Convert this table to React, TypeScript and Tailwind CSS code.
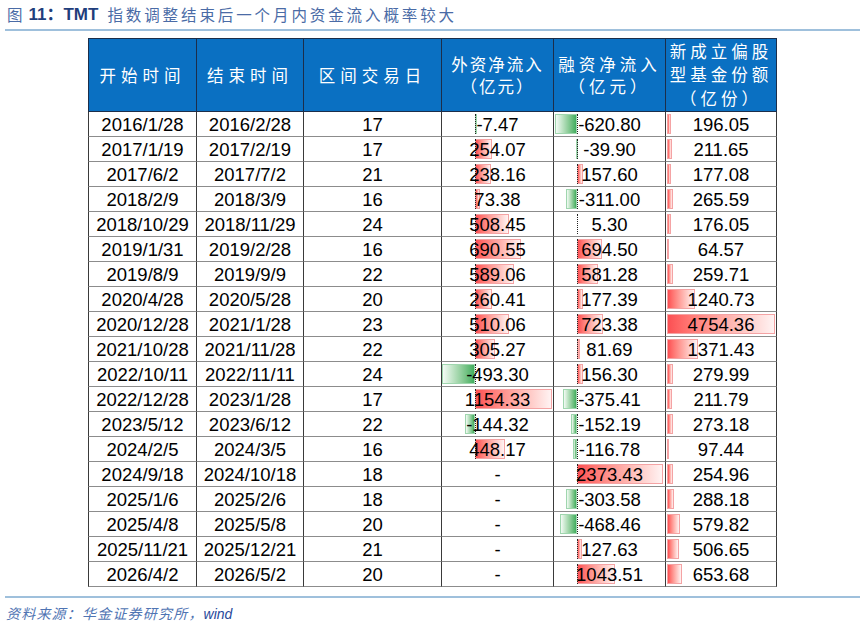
import React from "react";

type Row = [string, string, string, number | null, number, number];

const rows: Row[] = [
  ["2016/1/28", "2016/2/28", "17", -7.47, -620.8, 196.05],
  ["2017/1/19", "2017/2/19", "17", 254.07, -39.9, 211.65],
  ["2017/6/2", "2017/7/2", "21", 238.16, 157.6, 177.08],
  ["2018/2/9", "2018/3/9", "16", 73.38, -311.0, 265.59],
  ["2018/10/29", "2018/11/29", "24", 508.45, 5.3, 176.05],
  ["2019/1/31", "2019/2/28", "16", 690.55, 694.5, 64.57],
  ["2019/8/9", "2019/9/9", "22", 589.06, 581.28, 259.71],
  ["2020/4/28", "2020/5/28", "20", 260.41, 177.39, 1240.73],
  ["2020/12/28", "2021/1/28", "23", 510.06, 723.38, 4754.36],
  ["2021/10/28", "2021/11/28", "22", 305.27, 81.69, 1371.43],
  ["2022/10/11", "2022/11/11", "24", -493.3, 156.3, 279.99],
  ["2022/12/28", "2023/1/28", "17", 1154.33, -375.41, 211.79],
  ["2023/5/12", "2023/6/12", "22", -144.32, -152.19, 273.18],
  ["2024/2/5", "2024/3/5", "16", 448.17, -116.78, 97.44],
  ["2024/9/18", "2024/10/18", "18", null, 2373.43, 254.96],
  ["2025/1/6", "2025/2/6", "18", null, -303.58, 288.18],
  ["2025/4/8", "2025/5/8", "20", null, -468.46, 579.82],
  ["2025/11/21", "2025/12/21", "21", null, 127.63, 506.65],
  ["2026/4/2", "2026/5/2", "20", null, 1043.51, 653.68],
];

const cell =
  "relative flex items-center justify-center h-[25px] border-r border-b border-r-[#3a3a3a] border-b-[#8c8c8c] text-[18.5px] leading-[25px] text-black";

// excel-style data bar: axis = px from cell left, scale = px per unit
function BarCell({ v, axis, scale, showAxis }: { v: number | null; axis: number; scale: number; showAxis: boolean }) {
  if (v === null) return <div className={cell}>-</div>;
  const w = Math.abs(v) * scale;
  const neg = v < 0;
  return (
    <div className={cell}>
      {w > 0.3 &&
        (neg ? (
          <div
            className="absolute top-[2px] bottom-[2px] border border-[#9fd6ae] bg-gradient-to-r from-[#f3fbf5] to-[#3fae5e]"
            style={{ left: axis - w, width: w }}
          />
        ) : (
          <div
            className="absolute top-[2px] bottom-[2px] border border-[#f4a3a4] bg-gradient-to-r from-[#fb4f53] to-[#fff3f3]"
            style={{ left: axis, width: w }}
          />
        ))}
      {showAxis && <div className="absolute top-[2px] bottom-[2px] border-l border-dotted border-[#222]" style={{ left: axis }} />}
      <span className="relative">{v.toFixed(2)}</span>
    </div>
  );
}

const head =
  "flex flex-col items-center justify-center h-[74px] border-r border-b border-[#1c2e4a] bg-[#0a70c2] text-white text-[16.5px] leading-[22px] font-['Noto_Sans_CJK_SC',sans-serif]";

export default function App() {
  return (
    <div className="w-[864px] h-[628px] bg-white overflow-hidden font-['Liberation_Sans','Noto_Sans_CJK_SC',sans-serif]">
      {/* title */}
      <div className="flex items-center h-[29px] pl-[7px] pt-[1px] text-[15.5px] text-[#4a6ba6] font-['Noto_Sans_CJK_SC',sans-serif]">
        <span>图</span>
        <span className="ml-[6px] font-bold text-[#1f3e7c] text-[17px] font-['Liberation_Sans','Noto_Sans_CJK_SC',sans-serif]">11：TMT</span>
        <span className="ml-[9px] tracking-[2.9px]">指数调整结束后一个月内资金流入概率较大</span>
      </div>
      <div className="mx-[5px] w-[855px] h-[2px] bg-[#9fc0dc]" />

      {/* table */}
      <div className="ml-[88px] mt-[7px] w-[689px] grid grid-cols-[109px_107px_138px_112px_112px_111px]">
        <div className={`${head} border-l border-t tracking-[5px]`}>开始时间</div>
        <div className={`${head} border-t tracking-[5px]`}>结束时间</div>
        <div className={`${head} border-t tracking-[5px]`}>区间交易日</div>
        <div className={`${head} border-t tracking-[2px]`}>
          <span>外资净流入</span>
          <span>（亿元）</span>
        </div>
        <div className={`${head} border-t tracking-[4px]`}>
          <span>融资净流入</span>
          <span>（亿元）</span>
        </div>
        <div className={`${head} border-t tracking-[4px] leading-[23.5px]`}>
          <span>新成立偏股</span>
          <span>型基金份额</span>
          <span>（亿份）</span>
        </div>

        {rows.map((r) => (
          <React.Fragment key={r[0]}>
            <div className={`${cell} border-l border-l-[#3a3a3a]`}>{r[0]}</div>
            <div className={cell}>{r[1]}</div>
            <div className={cell}>{r[2]}</div>
            <BarCell v={r[3]} axis={33} scale={0.0667} showAxis />
            <BarCell v={r[4]} axis={23} scale={0.03624} showAxis />
            <BarCell v={r[5]} axis={1} scale={0.0227} showAxis={false} />
          </React.Fragment>
        ))}
      </div>

      <div className="mx-[5px] mt-[9px] w-[855px] h-[2px] bg-[#9fc0dc]" />
      <div className="pl-[6px] pt-[5px] text-[14px] italic text-[#4f74b3] tracking-[1.2px] font-['Noto_Sans_CJK_SC',sans-serif]">
        资料来源：华金证券研究所，
        <span className="text-[#27489a] tracking-normal font-['Liberation_Sans',sans-serif]">wind</span>
      </div>
    </div>
  );
}
